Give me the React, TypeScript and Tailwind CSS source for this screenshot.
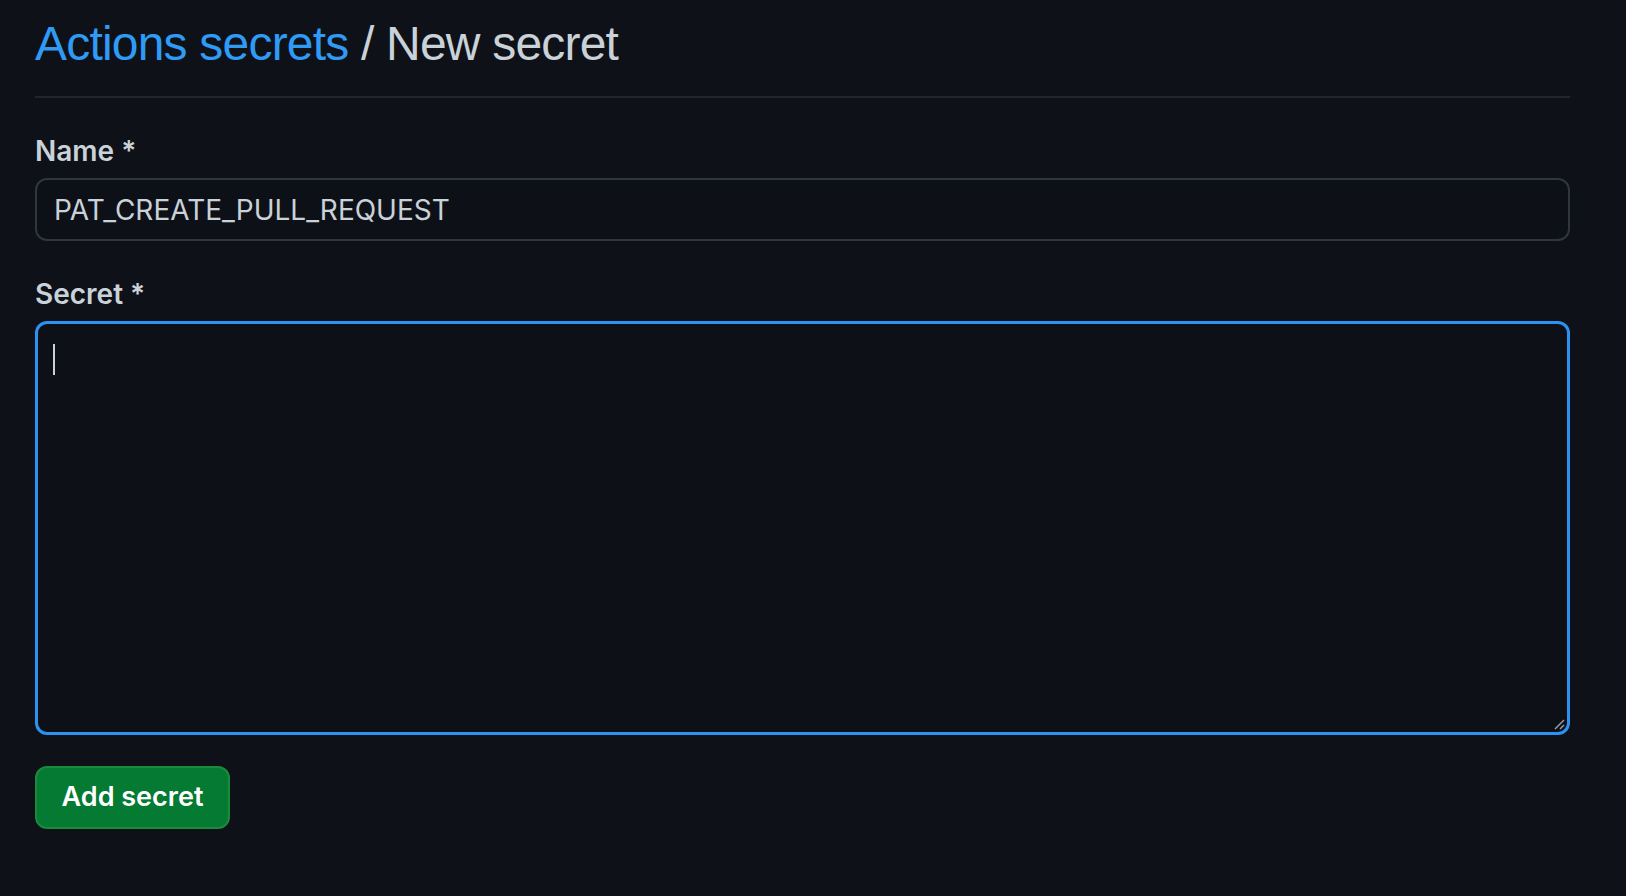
export default function App() {
  return (
    <div
      className="min-h-screen w-full bg-[#0e1117] pl-[35px] pr-[56px] pt-[14px]"
      style={{ fontFamily: "Inter, 'Liberation Sans', sans-serif" }}
    >
      {/* Subhead */}
      <div className="flex items-start h-[84px] border-b-2 border-[#21262d] mb-[36px]">
        <h2
          className="text-[48px] leading-[60px] font-normal tracking-[-0.8px] text-[#c9d1d9]"
          style={{ fontFamily: "'Liberation Sans', Arial, sans-serif" }}
        >
          <a className="text-[#2f9bf5]">Actions secrets</a>
          <span> / New secret</span>
        </h2>
      </div>

      <form className="flex flex-col">
        <label className="text-[28px] leading-[34px] font-semibold text-[#c9d1d9]">Name *</label>
        <div className="mt-[10px] h-[63px] w-full rounded-[12px] border-2 border-[#30363d] bg-[#0d1117] flex items-center px-[17px]">
          <span className="text-[28px] text-[#c9d1d9]">PAT_CREATE_PULL_REQUEST</span>
        </div>

        <label className="mt-[36px] text-[28px] leading-[34px] font-semibold text-[#c9d1d9]">Secret *</label>
        <div className="mt-[10px] relative h-[414px] w-full rounded-[12px] border-[3px] border-[#2c92f2] bg-[#0d1117] px-[15px] pt-[20px]">
          <div className="w-[2px] h-[31px] bg-[#c9d1d9]" />
          {/* resize grip */}
          <svg className="absolute right-[2px] bottom-[2px]" width="12" height="12" viewBox="0 0 12 12">
            <line x1="2" y1="11" x2="11" y2="2" stroke="#9aa0a6" strokeWidth="1.5" />
            <line x1="7" y1="11" x2="11" y2="7" stroke="#9aa0a6" strokeWidth="1.5" />
          </svg>
        </div>

        <div className="mt-[31px]">
          <button
            type="button"
            className="h-[63px] w-[195px] rounded-[12px] border-2 border-[#1c8a3d] bg-[#047a33] text-[27px] font-semibold text-white"
          >
            Add secret
          </button>
        </div>
      </form>
    </div>
  );
}
